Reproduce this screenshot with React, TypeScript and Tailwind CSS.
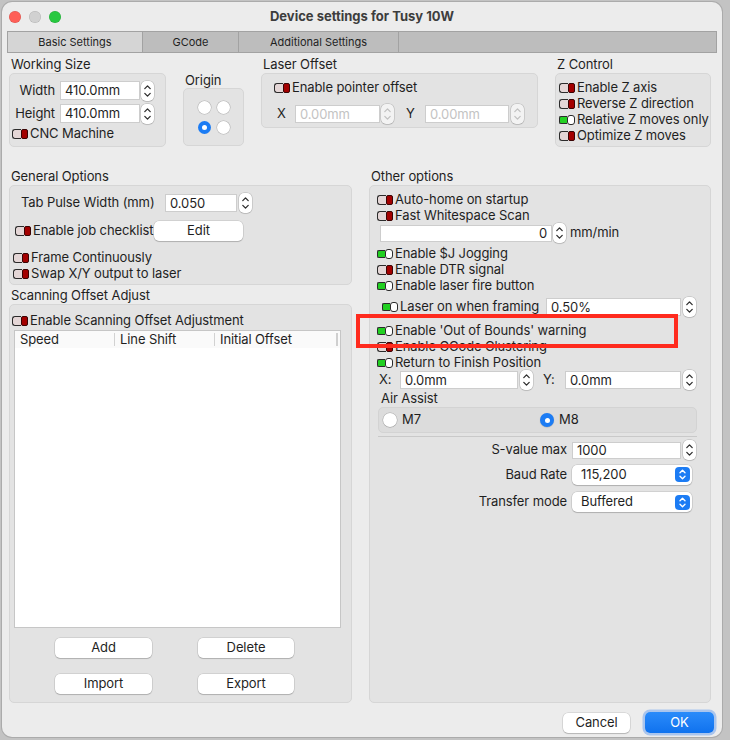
import type { ReactNode } from "react";

function Toggle({ on = false }: { on?: boolean }) {
  if (on) {
    return (
      <span className="flex h-[10px] w-[16px] shrink-0 items-center">
        <span className="h-[8px] w-[9px] rounded-l-[2px] border border-r-0 border-[#2b2b2b] bg-[#22d022]" />
        <span className="h-[10px] w-[8px] rounded-[3px] border border-[#2b2b2b] bg-white" />
      </span>
    );
  }
  return (
    <span className="flex h-[10px] w-[16px] shrink-0 items-center">
      <span className="h-[10px] w-[9px] rounded-l-[3px] border border-r-0 border-[#2b2b2b] bg-[#e4d6d6]" />
      <span className="h-[10px] w-[7px] rounded-[2px] border border-[#3a0505] bg-[#a30000]" />
    </span>
  );
}

function Option({
  on = false,
  children,
  className = "",
}: {
  on?: boolean;
  children: ReactNode;
  className?: string;
}) {
  return (
    <div className={["flex h-[16px] items-center gap-[2px] whitespace-nowrap", className].join(" ")}>
      <Toggle on={on} />
      <span>{children}</span>
    </div>
  );
}

function Stepper({ disabled = false }: { disabled?: boolean }) {
  return (
    <span
      className={[
        "flex h-[20px] w-[13px] shrink-0 items-center justify-center rounded-[5px] shadow-[0_0_0_0.5px_rgba(0,0,0,0.2),0_0.5px_1px_rgba(0,0,0,0.15)]",
        disabled ? "bg-[#f3f3f3]" : "bg-white",
      ].join(" ")}
    >
      <svg
        width="9"
        height="16"
        viewBox="0 0 9 16"
        fill="none"
        stroke={disabled ? "#c2c2c2" : "#2d2d2d"}
        strokeWidth="1.3"
        strokeLinecap="round"
        strokeLinejoin="round"
      >
        <path d="M1.8 5.6 4.5 2.9 7.2 5.6" />
        <path d="M1.8 10.4 4.5 13.1 7.2 10.4" />
      </svg>
    </span>
  );
}

function Field({
  value,
  className = "",
  disabled = false,
  right = false,
}: {
  value: string;
  className?: string;
  disabled?: boolean;
  right?: boolean;
}) {
  return (
    <div
      className={[
        "flex shrink-0 items-center border border-[#cdcdcd] bg-white px-[4px] leading-none",
        disabled ? "text-[#c3c3c3]" : "text-[#1f1f1f]",
        right ? "justify-end" : "justify-start",
        className,
      ].join(" ")}
    >
      {value}
    </div>
  );
}

function Button({ children, className = "" }: { children: ReactNode; className?: string }) {
  return (
    <div
      className={[
        "flex h-[20px] shrink-0 items-center justify-center rounded-[5px] bg-white text-[#1f1f1f] shadow-[0_0_0_0.5px_rgba(0,0,0,0.16),0_1px_1px_rgba(0,0,0,0.16)]",
        className,
      ].join(" ")}
    >
      {children}
    </div>
  );
}

function Radio({ checked = false }: { checked?: boolean }) {
  return checked ? (
    <span className="flex h-[14px] w-[14px] shrink-0 items-center justify-center rounded-full bg-[#1c7cf4] shadow-[0_0.5px_1px_rgba(0,0,0,0.2)]">
      <span className="h-[5px] w-[5px] rounded-full bg-white" />
    </span>
  ) : (
    <span className="h-[14px] w-[14px] shrink-0 rounded-full bg-white shadow-[0_0_0_0.5px_rgba(0,0,0,0.22),0_0.5px_1px_rgba(0,0,0,0.15)]" />
  );
}

function Select({ value, className = "" }: { value: string; className?: string }) {
  return (
    <div
      className={[
        "flex h-[20px] shrink-0 items-center justify-between rounded-[5px] bg-white pl-[9px] pr-[2px] shadow-[0_0_0_0.5px_rgba(0,0,0,0.16),0_1px_1px_rgba(0,0,0,0.16)]",
        className,
      ].join(" ")}
    >
      <span>{value}</span>
      <span className="flex h-[15px] w-[15px] items-center justify-center rounded-[4px] bg-[#1c7cf4]">
        <svg width="9" height="13" viewBox="0 0 9 13" fill="none" stroke="white" strokeWidth="1.4" strokeLinecap="round" strokeLinejoin="round">
          <path d="M2 4.8 4.5 2.3 7 4.8" />
          <path d="M2 8.2 4.5 10.7 7 8.2" />
        </svg>
      </span>
    </div>
  );
}

function Group({ className = "", children }: { className?: string; children?: ReactNode }) {
  return (
    <div className={["rounded-[5px] border border-[#d6d6d6] bg-[#e3e3e3]", className].join(" ")}>
      {children}
    </div>
  );
}

function Label({ children, className = "" }: { children: ReactNode; className?: string }) {
  return <div className={["h-[17px] whitespace-nowrap pl-[2px] leading-[17px]", className].join(" ")}>{children}</div>;
}

const TABS = [
  { label: "Basic Settings", w: "w-[135px]", active: true },
  { label: "GCode", w: "w-[96px]", active: false },
  { label: "Additional Settings", w: "w-[160px]", active: false },
];

export default function App() {
  return (
    <div className="relative h-[740px] w-[730px] overflow-hidden bg-[#c3c3c3] pl-[2px] pt-[2px] font-[Inter,'Noto_Sans',sans-serif] text-[13px] tracking-[-0.1px] text-[#1f1f1f]">
      <div className="relative flex h-[735px] w-[720px] flex-col rounded-[10px] bg-[#ececec] shadow-[0_0_0_1px_rgba(0,0,0,0.12)]">
        {/* title bar */}
        <div className="grid h-[29px] grid-cols-[1fr_auto_1fr] items-center">
          <div className="flex items-center gap-[8px] pl-[7px]">
            <span className="h-[12px] w-[12px] rounded-full bg-[#fe5f57] shadow-[inset_0_0_0_0.5px_rgba(0,0,0,0.15)]" />
            <span className="h-[12px] w-[12px] rounded-full bg-[#d1d1d1] shadow-[inset_0_0_0_0.5px_rgba(0,0,0,0.15)]" />
            <span className="h-[12px] w-[12px] rounded-full bg-[#27c840] shadow-[inset_0_0_0_0.5px_rgba(0,0,0,0.15)]" />
          </div>
          <div className="font-bold tracking-normal text-[#3d3d3d]">Device settings for Tusy 10W</div>
          <div />
        </div>

        {/* tabs */}
        <div className="mx-[5px] flex h-[22px] border border-[#a2a2a2] bg-[#bdbdbd] text-[11px] tracking-normal">
          {TABS.map((t) => (
            <div
              key={t.label}
              className={[
                "flex items-center justify-center border-r border-[#a2a2a2]",
                t.w,
                t.active ? "bg-[#d5d5d5]" : "bg-[#bdbdbd]",
              ].join(" ")}
            >
              {t.label}
            </div>
          ))}
        </div>

        <div className="px-[7px]">
          {/* top row */}
          <div className="mt-[3px] flex h-[91px] gap-[17px]">
            <div className="w-[157px]">
              <Label>Working Size</Label>
              <Group className="h-[74px] pt-[7px]">
                <div className="flex h-[19px] items-center">
                  <span className="w-[46px] pr-[1px] text-right">Width</span>
                  <Field value="410.0mm" className="ml-[4px] h-[19px] w-[80px]" />
                  <span className="ml-[1px]">
                    <Stepper />
                  </span>
                </div>
                <div className="mt-[4px] flex h-[19px] items-center">
                  <span className="w-[46px] pr-[1px] text-right">Height</span>
                  <Field value="410.0mm" className="ml-[4px] h-[19px] w-[80px]" />
                  <span className="ml-[1px]">
                    <Stepper />
                  </span>
                </div>
                <Option className="mt-[3px] pl-[2px]">CNC Machine</Option>
              </Group>
            </div>

            <div className="w-[61px] pt-[16px]">
              <div className="h-[16px] pl-[2px] leading-[16px]">Origin</div>
              <Group className="flex h-[58px] items-center justify-center">
                <div className="grid grid-cols-[13px_13px] gap-x-[6px] gap-y-[7px]">
                  <span className="h-[13px] w-[13px] rounded-full bg-white shadow-[0_0_0_0.5px_rgba(0,0,0,0.22)]" />
                  <span className="h-[13px] w-[13px] rounded-full bg-white shadow-[0_0_0_0.5px_rgba(0,0,0,0.22)]" />
                  <span className="flex h-[13px] w-[13px] items-center justify-center rounded-full bg-[#1c7cf4]">
                    <span className="h-[5px] w-[5px] rounded-full bg-white" />
                  </span>
                  <span className="h-[13px] w-[13px] rounded-full bg-white shadow-[0_0_0_0.5px_rgba(0,0,0,0.22)]" />
                </div>
              </Group>
            </div>

            <div className="w-[277px]">
              <Label>Laser Offset</Label>
              <Group className="h-[55px] pt-[6px]">
                <Option className="pl-[12px]">Enable pointer offset</Option>
                <div className="mt-[9px] flex h-[18px] items-center pl-[15px]">
                  <span className="w-[18px]">X</span>
                  <Field value="0.00mm" disabled className="h-[18px] w-[85px]" />
                  <span className="ml-[1px]">
                    <Stepper disabled />
                  </span>
                  <span className="ml-[12px] w-[19px]">Y</span>
                  <Field value="0.00mm" disabled className="h-[18px] w-[84px]" />
                  <span className="ml-[2px]">
                    <Stepper disabled />
                  </span>
                </div>
              </Group>
            </div>

            <div className="w-[156px]">
              <Label>Z Control</Label>
              <Group className="h-[74px] pl-[3px] pt-[6px]">
                <Option>Enable Z axis</Option>
                <Option>Reverse Z direction</Option>
                <Option on>Relative Z moves only</Option>
                <Option>Optimize Z moves</Option>
              </Group>
            </div>
          </div>

          {/* lower area */}
          <div className="mt-[21px] flex gap-[17px]">
            <div className="w-[343px]">
              <Label>General Options</Label>
              <Group className="h-[100px] pt-[8px]">
                <div className="flex h-[18px] items-center pl-[11px]">
                  <span className="w-[144px] whitespace-nowrap">Tab Pulse Width (mm)</span>
                  <Field value="0.050" className="h-[18px] w-[72px]" />
                  <span className="ml-[2px]">
                    <Stepper />
                  </span>
                </div>
                <div className="mt-[9px] flex h-[20px] items-center pl-[5px]">
                  <Toggle />
                  <span className="ml-[2px] w-[121px] whitespace-nowrap">Enable job checklist</span>
                  <Button className="w-[89px]">Edit</Button>
                </div>
                <Option className="mt-[9px] pl-[3px]">Frame Continuously</Option>
                <Option className="pl-[3px]">Swap X/Y output to laser</Option>
              </Group>

              <Label className="mt-[2px]">Scanning Offset Adjust</Label>
              <Group className="h-[399px] pt-[8px]">
                <Option className="pl-[2px]">Enable Scanning Offset Adjustment</Option>
                <div className="ml-[4px] mt-[1px] h-[298px] w-[327px] border border-[#c6c6c6] bg-white">
                  <div className="flex h-[17px] items-center bg-[#fafafa] leading-none">
                    <span className="w-[100px] border-r border-[#d2d2d2] pl-[5px]">Speed</span>
                    <span className="w-[100px] border-r border-[#d2d2d2] pl-[5px]">Line Shift</span>
                    <span className="w-[123px] border-r-[2px] border-[#cfcfcf] pl-[5px]">Initial Offset</span>
                  </div>
                </div>
                <div className="mt-[10px] flex pl-[45px]">
                  <Button className="w-[97px]">Add</Button>
                  <Button className="ml-[46px] w-[96px]">Delete</Button>
                </div>
                <div className="mt-[16px] flex pl-[45px]">
                  <Button className="w-[97px]">Import</Button>
                  <Button className="ml-[46px] w-[96px]">Export</Button>
                </div>
              </Group>
            </div>

            <div className="w-[342px]">
              <Label>Other options</Label>
              <Group className="h-[518px] pt-[6px]">
                <Option className="pl-[7px]">Auto-home on startup</Option>
                <Option className="pl-[7px]">Fast Whitespace Scan</Option>
                <div className="flex h-[18px] items-center pl-[10px]">
                  <Field value="0" right className="h-[17px] w-[172px]" />
                  <span className="ml-[1px]">
                    <Stepper />
                  </span>
                  <span className="ml-[4px]">mm/min</span>
                </div>
                <Option on className="mt-[4px] pl-[7px]">Enable $J Jogging</Option>
                <Option className="pl-[7px]">Enable DTR signal</Option>
                <Option on className="pl-[7px]">Enable laser fire button</Option>
                <div className="mt-[4px] flex h-[18px] items-center pl-[12px]">
                  <Toggle on />
                  <span className="ml-[2px] w-[146px] whitespace-nowrap">Laser on when framing</span>
                  <Field value="0.50%" className="h-[18px] w-[135px]" />
                  <span className="ml-[2px]">
                    <Stepper />
                  </span>
                </div>
                <Option on className="mt-[7px] pl-[7px]">Enable 'Out of Bounds' warning</Option>
                <Option className="pl-[7px]">Enable GCode Clustering</Option>
                <Option on className="pl-[7px]">Return to Finish Position</Option>
                <div className="flex h-[18px] items-center pl-[9px]">
                  <span className="w-[21px]">X:</span>
                  <Field value="0.0mm" className="h-[18px] w-[118px]" />
                  <span className="ml-[2px]">
                    <Stepper />
                  </span>
                  <span className="ml-[10px] w-[22px]">Y:</span>
                  <Field value="0.0mm" className="h-[18px] w-[116px]" />
                  <span className="ml-[2px]">
                    <Stepper />
                  </span>
                </div>
                <div className="mt-[1px] h-[16px] pl-[11px] leading-[16px]">Air Assist</div>
                <div className="ml-[8px] mt-[1px] flex h-[26px] w-[319px] items-center rounded-[5px] border border-[#d3d3d3] bg-[#dcdcdc] pl-[4px]">
                  <div className="flex w-[157px] items-center gap-[5px]">
                    <Radio />
                    <span>M7</span>
                  </div>
                  <div className="flex items-center gap-[5px]">
                    <Radio checked />
                    <span>M8</span>
                  </div>
                </div>
                <div className="ml-[8px] mt-[3px] h-px w-[319px] bg-[#c9c9c9]" />
                <div className="mt-[4px] flex h-[18px] items-center">
                  <span className="w-[197px] text-right">S-value max</span>
                  <Field value="1000" className="ml-[5px] h-[17px] w-[109px]" />
                  <span className="ml-[2px]">
                    <Stepper />
                  </span>
                </div>
                <div className="mt-[5px] flex h-[21px] items-center">
                  <span className="w-[197px] text-right">Baud Rate</span>
                  <Select value="115,200" className="ml-[5px] w-[120px]" />
                </div>
                <div className="mt-[7px] flex h-[20px] items-center">
                  <span className="w-[197px] text-right">Transfer mode</span>
                  <Select value="Buffered" className="ml-[5px] w-[120px]" />
                </div>
              </Group>
            </div>
          </div>

          {/* footer */}
          <div className="mt-[9px] flex justify-end gap-[15px] pr-[1px]">
            <Button className="mt-[1px] w-[67px]">Cancel</Button>
            <div className="flex h-[21px] w-[69px] items-center justify-center rounded-[5px] bg-gradient-to-b from-[#2a8bfa] to-[#0f72ee] text-white shadow-[0_0_0_2.5px_rgba(90,150,240,0.45)]">
              OK
            </div>
          </div>
        </div>

        {/* annotation */}
        <div className="pointer-events-none absolute left-[354px] top-[312px] h-[34px] w-[322px] border-[4px] border-[#ff2b1e]" />
      </div>
    </div>
  );
}
